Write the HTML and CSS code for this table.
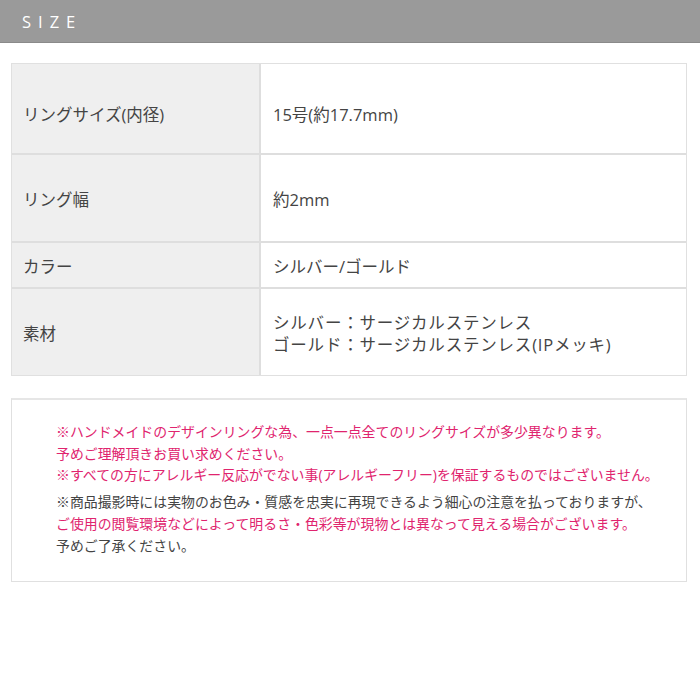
FILE: index.html
```html
<!DOCTYPE html>
<html lang="ja">
<head>
<meta charset="utf-8">
<link rel="stylesheet" href="styles.css">
</head>
<body>
<header class="head"><h1 class="title">SIZE</h1></header>
<main class="wrap">
  <div class="spec">
    <div class="row row-tall r1">
      <div class="label">リングサイズ(内径)</div>
      <div class="value">15号(約17.7mm)</div>
    </div>
    <div class="row row-tall r2">
      <div class="label">リング幅</div>
      <div class="value">約2mm</div>
    </div>
    <div class="row row-short">
      <div class="label">カラー</div>
      <div class="value">シルバー/ゴールド</div>
    </div>
    <div class="row row-tall r4">
      <div class="label">素材</div>
      <div class="value">シルバー：サージカルステンレス<br>ゴールド：サージカルステンレス(IPメッキ)</div>
    </div>
  </div>
  <div class="notes">
    <p class="group pink">※ハンドメイドのデザインリングな為、一点一点全てのリングサイズが多少異なります。<br>予めご理解頂きお買い求めください。<br>※すべての方にアレルギー反応がでない事(アレルギーフリー)を保証するものではございません。</p>
    <p class="group gray">※商品撮影時には実物のお色み・質感を忠実に再現できるよう細心の注意を払っておりますが、<br><span class="pink">ご使用の閲覧環境などによって明るさ・色彩等が現物とは異なって見える場合がございます。</span><br>予めご了承ください。</p>
  </div>
</main>
</body>
</html>
```
FILE: styles.css
```css
* { box-sizing: border-box; }
html, body { margin: 0; padding: 0; background: #fff; }
body {
  font-family: "Open Sans", "Noto Sans CJK JP", sans-serif;
  color: #444;
  width: 700px;
}
.head {
  height: 43px;
  background: #9a9a9a;
  border-bottom: 1px solid #8a8a8a;
  display: flex;
  align-items: center;
  padding-left: 22px;
}
.title {
  margin: 0;
  font-family: "Open Sans", sans-serif;
  font-weight: 400;
  font-size: 16.5px;
  letter-spacing: 7px;
  color: #fff;
  line-height: 1;
  padding-top: 3px;
}
.wrap {
  padding: 20px 13px 0 11px;
}
.spec {
  border: 1px solid #e0e0e0;
}
.row {
  display: grid;
  grid-template-columns: 249px 1fr;
  border-top: 2px solid #dedede;
}
.row:first-child { border-top: 0; }
.label, .value {
  display: flex;
  align-items: center;
  font-size: 16.5px;
  line-height: 22px;
  color: #444;
}
.label {
  background: #efefef;
  padding-left: 11px;
  border-right: 2px solid #dedede;
}
.value {
  padding-left: 12px;
}
.r1 { height: 89px; }
.r1 .label, .r1 .value { padding-top: 12px; }
.r2 { height: 88px; }
.r2 .label, .r2 .value { padding-top: 4px; }
.row-short { height: 46px; }
.row-short .label, .row-short .value { padding-top: 4px; }
.r4 { height: 88px; }
.r4 .label, .r4 .value { padding-top: 4px; }
.r4 .value { letter-spacing: 0.8px; }
.notes {
  margin-top: 22px;
  border: 1px solid #e0e0e0;
  border-top: 2px solid #e6e6e6;
  height: 184px;
  padding: 21px 0 0 44px;
}
.group {
  margin: 0;
  font-size: 13.9px;
  line-height: 21.7px;
  white-space: nowrap;
}
.group + .group { margin-top: 5px; }
.pink { color: #e0246e; }
.gray { color: #444; }
```
